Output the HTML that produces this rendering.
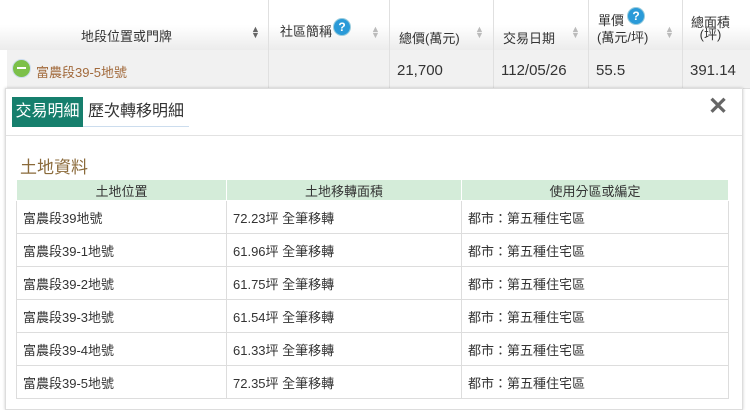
<!DOCTYPE html>
<html><head><meta charset="utf-8"><style>
body{margin:0;width:750px;height:403px;overflow:hidden;background:#fff;font-family:"Liberation Sans","Noto Sans CJK TC",sans-serif;position:relative}
.abs{position:absolute}
.hdr{left:0;top:0;width:750px;height:50px;background:linear-gradient(#fff,#fff 50%,#ececec)}
.row{left:7px;top:50px;width:743px;height:38px;background:#f1f1f1;border-bottom:1px solid #ddd}
.vl{width:1px;background:#e0e0e0}
.ht{font-size:13px;color:#333}
.sort{font-size:9px;color:#bbb;line-height:6px}
.q{width:16px;height:16px;border-radius:50%;background:#2a9ad8;color:#fff;font-size:12px;font-weight:bold;text-align:center;line-height:16px;border:1px solid #9cd}
.cell{font-size:15px;color:#333}
.pop{left:5px;top:88px;width:736px;height:320px;background:#fff;border:1px solid #ddd;box-shadow:0 0 3px rgba(0,0,0,.2)}
table{border-collapse:collapse;position:absolute;left:10px;top:90px;width:713px;font-size:13px;color:#333}
th{background:#d4ecd9;font-weight:normal;height:20px;padding:0;border:1px solid #fff}
td{height:32px;border:1px solid #ddd;padding:0 0 0 6px}
</style></head><body>
<div class="abs hdr"></div>
<div class="abs row"></div>
<div class="abs vl" style="left:268px;top:0;height:88px"></div>
<div class="abs vl" style="left:389px;top:0;height:88px"></div>
<div class="abs vl" style="left:493px;top:0;height:88px"></div>
<div class="abs vl" style="left:588px;top:0;height:88px"></div>
<div class="abs vl" style="left:682px;top:0;height:88px"></div>
<div class="abs ht" style="left:81px;top:26px">地段位置或門牌</div>
<div class="abs sort" style="left:251px;top:26px;color:#666">▲<br>▼</div>
<div class="abs ht" style="left:280px;top:21px">社區簡稱</div>
<div class="abs q" style="left:333px;top:18px">?</div>
<div class="abs sort" style="left:371px;top:26px">▲<br>▼</div>
<div class="abs ht" style="left:399px;top:28px">總價(萬元)</div>
<div class="abs sort" style="left:475px;top:26px">▲<br>▼</div>
<div class="abs ht" style="left:503px;top:28px">交易日期</div>
<div class="abs sort" style="left:571px;top:26px">▲<br>▼</div>
<div class="abs ht" style="left:598px;top:10px">單價</div>
<div class="abs q" style="left:627px;top:7px">?</div>
<div class="abs ht" style="left:597px;top:27px">(萬元/坪)</div>
<div class="abs sort" style="left:665px;top:26px">▲<br>▼</div>
<div class="abs ht" style="left:691px;top:17px;line-height:12px;text-align:center">總面積<br>(坪)</div>
<div class="abs" style="left:12px;top:59px;width:17px;height:17px;border-radius:50%;background:#7cc04a;border:1px solid #cde"><div style="margin:7px 4px;width:9px;height:2px;background:#fff"></div></div>
<div class="abs" style="left:36px;top:62px;font-size:13px;color:#a26a3c">富農段39-5地號</div>
<div class="abs cell" style="left:397px;top:62px">21,700</div>
<div class="abs cell" style="left:501px;top:62px">112/05/26</div>
<div class="abs cell" style="left:596px;top:62px">55.5</div>
<div class="abs cell" style="left:690px;top:62px">391.14</div>
<div class="abs pop">
<div class="abs" style="left:6px;top:8px;width:71px;height:30px;background:#167f6d;color:#fff;font-size:16px;line-height:30px;text-align:center">交易明細</div>
<div class="abs" style="left:77px;top:8px;width:106px;height:29px;border-bottom:1px solid #cde;color:#333;font-size:16px;line-height:30px;text-align:center">歷次轉移明細</div>
<div class="abs" style="left:702px;top:3px;font-size:24px;font-weight:bold;color:#666">✕</div>
<div class="abs" style="left:0;top:46px;width:736px;height:1px;background:#e2e2e2"></div>
<div class="abs" style="left:14px;top:64px;font-size:17px;color:#8a6a3a">土地資料</div>
<table>
<tr><th style="width:209px">土地位置</th><th style="width:234px">土地移轉面積</th><th>使用分區或編定</th></tr>
<tr><td>富農段39地號</td><td>72.23坪 全筆移轉</td><td>都市：第五種住宅區</td></tr>
<tr><td>富農段39-1地號</td><td>61.96坪 全筆移轉</td><td>都市：第五種住宅區</td></tr>
<tr><td>富農段39-2地號</td><td>61.75坪 全筆移轉</td><td>都市：第五種住宅區</td></tr>
<tr><td>富農段39-3地號</td><td>61.54坪 全筆移轉</td><td>都市：第五種住宅區</td></tr>
<tr><td>富農段39-4地號</td><td>61.33坪 全筆移轉</td><td>都市：第五種住宅區</td></tr>
<tr><td>富農段39-5地號</td><td>72.35坪 全筆移轉</td><td>都市：第五種住宅區</td></tr>
</table>
</div>
</body></html>
